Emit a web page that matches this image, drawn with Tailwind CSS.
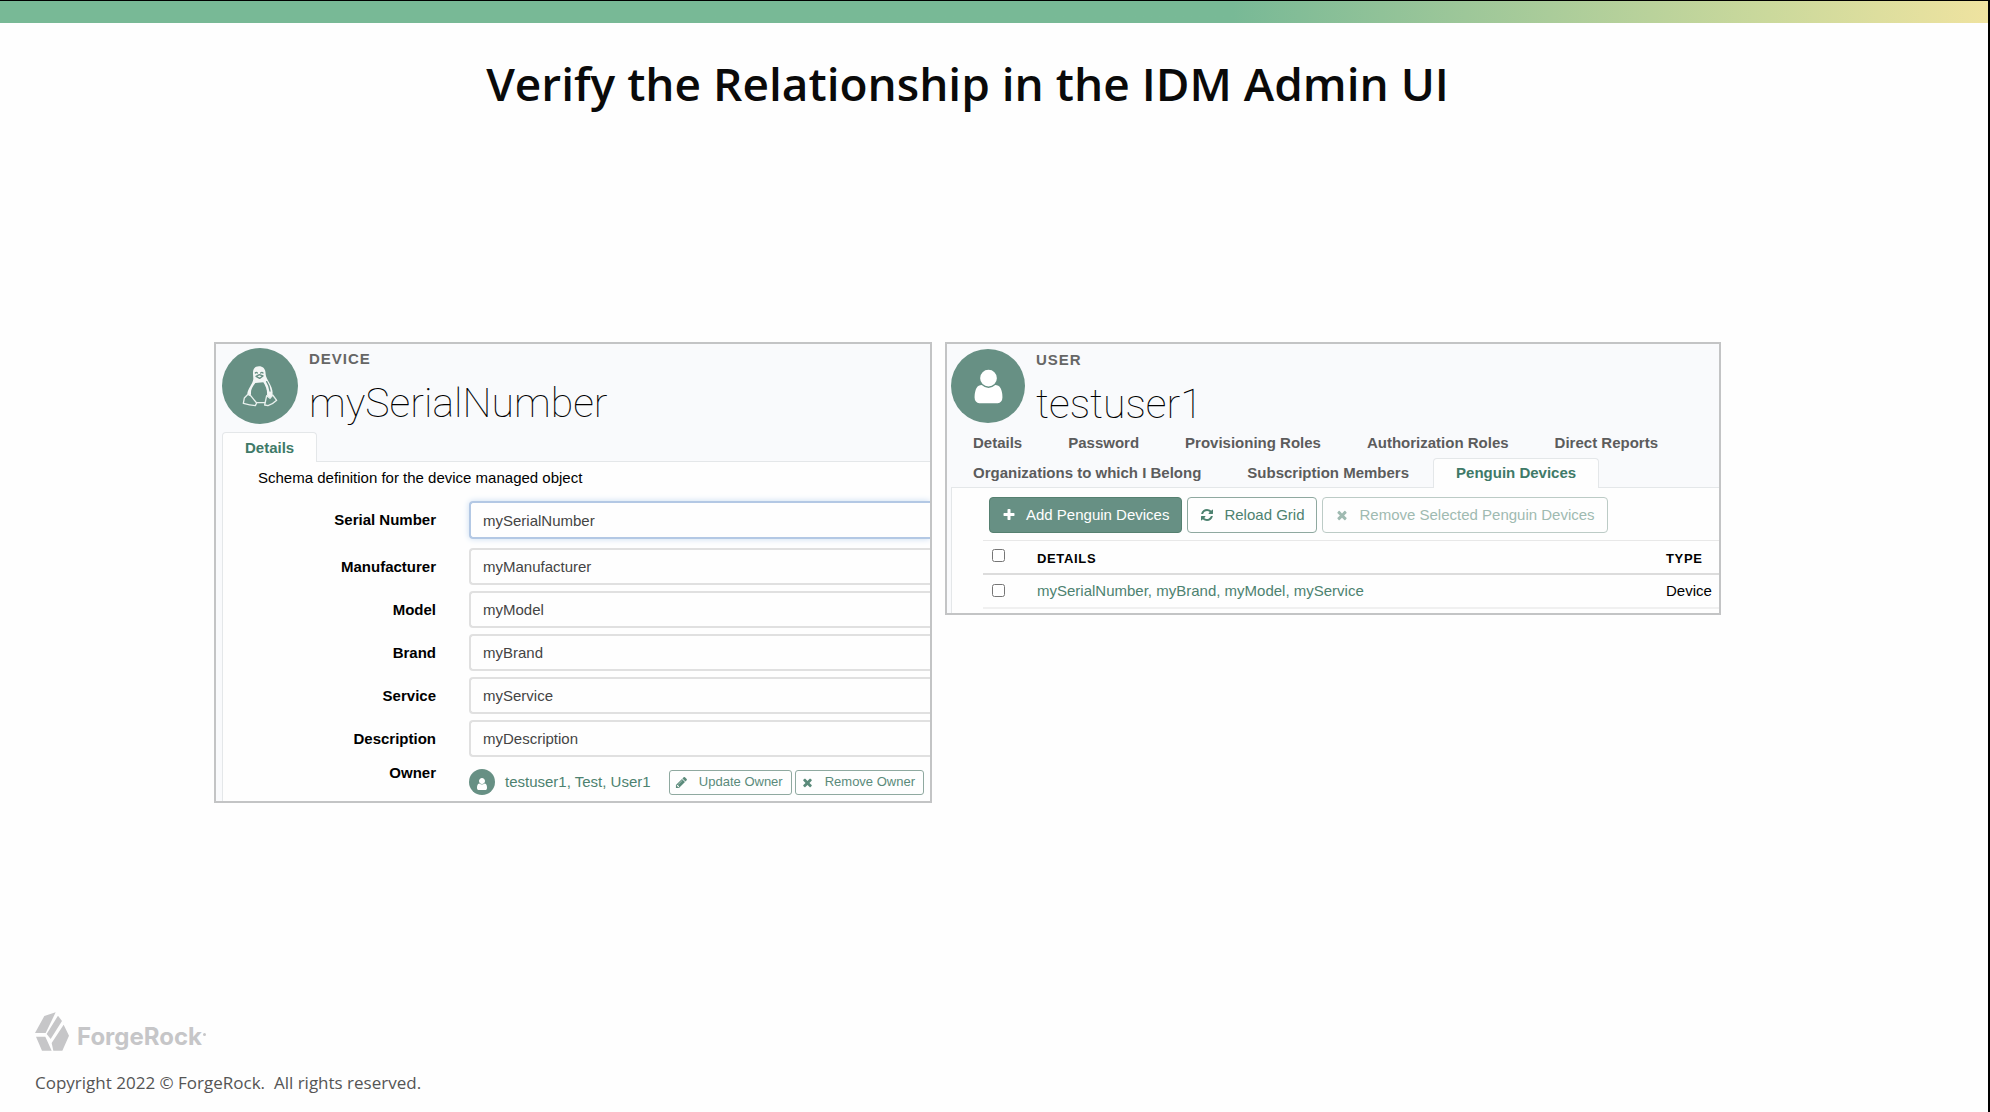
<!DOCTYPE html>
<html lang="en">
<head>
<meta charset="utf-8">
<title>Verify the Relationship in the IDM Admin UI</title>
<script src="https://cdn.jsdelivr.net/npm/@tailwindcss/browser@4"></script>
</head>
<body class="flex min-h-screen flex-col border-t border-r-2 border-black border-t-black bg-[#fefefe] font-['Liberation_Sans',Arial,sans-serif] text-[15px] leading-5 text-black">
<svg class="hidden" aria-hidden="true">
  <symbol id="i-plus" viewBox="0 0 1792 1792"><path d="M1600 736v192q0 40-28 68t-68 28h-416v416q0 40-28 68t-68 28h-192q-40 0-68-28t-28-68v-416h-416q-40 0-68-28t-28-68v-192q0-40 28-68t68-28h416v-416q0-40 28-68t68-28h192q40 0 68 28t28 68v416h416q40 0 68 28t28 68z"/></symbol>
  <symbol id="i-times" viewBox="0 0 1792 1792"><path d="M1490 1322q0 40-28 68l-136 136q-28 28-68 28t-68-28l-294-294-294 294q-28 28-68 28t-68-28l-136-136q-28-28-28-68t28-68l294-294-294-294q-28-28-28-68t28-68l136-136q28-28 68-28t68 28l294 294 294-294q28-28 68-28t68 28l136 136q28 28 28 68t-28 68l-294 294 294 294q28 28 28 68z"/></symbol>
  <symbol id="i-refresh" viewBox="0 0 1792 1792"><path d="M1639 1056q0 5-1 7-64 268-268 434.5t-478 166.5q-146 0-282.5-55t-243.5-157l-129 129q-19 19-45 19t-45-19-19-45v-448q0-26 19-45t45-19h448q26 0 45 19t19 45-19 45l-137 137q71 66 161 102t187 36q134 0 250-65t186-179q11-17 53-117 8-23 30-23h192q13 0 22.5 9.5t9.5 22.5zm25-800v448q0 26-19 45t-45 19h-448q-26 0-45-19t-19-45 19-45l138-138q-148-137-349-137-134 0-250 65t-186 179q-11 17-53 117-8 23-30 23h-199q-13 0-22.5-9.5t-9.5-22.5v-7q65-268 270-434.5t480-166.5q146 0 284 55.5t245 156.5l130-129q19-19 45-19t45 19 19 45z"/></symbol>
  <symbol id="i-pencil" viewBox="0 0 1792 1792"><path d="M491 1536l91-91-235-235-91 91v107h128v128h107zm523-928q0-22-22-22-10 0-17 7l-542 542q-7 7-7 17 0 22 22 22 10 0 17-7l542-542q7-7 7-17zm-54-192l416 416-832 832h-416v-416zm683 96q0 53-37 90l-166 166-416-416 166-165q36-38 90-38 53 0 91 38l235 234q37 39 37 91z"/></symbol>
  <symbol id="i-user" viewBox="0 0 1792 1792"><path d="M1536 1399q0 109-62.5 187t-150.5 78h-854q-88 0-150.5-78t-62.5-187q0-85 8.5-160.5t31.5-152 58.5-131 94-89 134.5-34.5q131 128 313 128t313-128q76 0 134.5 34.5t94 89 58.5 131 31.5 152 8.5 160.5zm-256-887q0 159-112.5 271.5t-271.5 112.5-271.5-112.5-112.5-271.5 112.5-271.5 271.5-112.5 271.5 112.5 112.5 271.5z"/></symbol>
</svg>

<div class="h-[22px] bg-linear-to-r from-[#78b996] from-62% via-[#cbd99c] via-89% to-[#efe3a0]"></div>

<main class="mr-[53px]">
  <h1 class="mt-[26px] text-center font-['Open_Sans',sans-serif] text-[46px] leading-[68px] font-semibold text-[#0a0a0a]">Verify the Relationship in the IDM Admin UI</h1>

  <div class="mx-[214px] mt-[225px] grid grid-cols-[718fr_776fr] items-start gap-[13px]">

    <section class="h-[461px] overflow-hidden border-2 border-[#c3c4c5] bg-[#f9fafc] pl-1.5">
      <header class="flex h-[88px] gap-[11px] pt-1">
        <div class="flex size-[76px] shrink-0 items-center justify-center rounded-full bg-[#679084]">
          <svg class="h-[42px] w-[36px]" viewBox="20 10 108 126" stroke-linejoin="round" stroke-linecap="round">
            <path d="M53 36C52 20 60 14 71 14S91 21 91 38C91 52 112 72 112 94Q112 104 106 108L96 104 92 84 84 66H60L48 88 46 104 36 98C36 82 52 68 54 52Z" fill="#fff" fill-opacity=".92"/>
            <path d="M60 64C48 78 44 92 50 102L66 122H88L94 106C98 90 92 74 84 62Z" fill="#679084"/>
            <path d="M60 34q3-4 6 0M76 34q4-4 7 0M62 44l10-5 11 4-10 7zM94 60q8 12 10 28" fill="none" stroke="#679084" stroke-width="4"/>
            <path d="M38 98L46 102 64 124 60 132Q44 130 24 125L27 109ZM94 102L104 110 112 100 124 116Q112 128 98 132L88 130ZM64 123H90" fill="none" stroke="#e8f0ed" stroke-width="4"/>
          </svg>
        </div>
        <div>
          <p class="pt-px text-[15px] leading-5 font-bold tracking-[1px] text-[#666]">DEVICE</p>
          <h2 class="mt-3 font-['Roboto',sans-serif] text-[41px] leading-[44px] font-thin">mySerialNumber</h2>
        </div>
      </header>
      <nav class="flex"><a href="#" class="relative z-10 -mb-px h-[30px] rounded-t border border-b-0 border-[#e4e7e9] bg-[#fefefe] px-[22px] pt-[5px] font-bold text-[#3f7a68]">Details</a></nav>
      <div class="border-t border-l border-[#e4e7e9] bg-[#fefefe] pb-[30px]">
        <p class="pt-[6px] pl-[35px]">Schema definition for the device managed object</p>
        <form class="grid grid-cols-[213px_1fr] items-center gap-x-[33px] gap-y-1.5 pt-[13px]">
          <label for="serial" class="mb-[3px] text-right font-bold">Serial Number</label>
          <input id="serial" value="mySerialNumber" class="mb-[3px] h-[38px] rounded-l border-2 border-r-0 border-[#b3c8e4] px-3 text-[#444] shadow-[0_0_6px_#c9dcf2]">
          <label for="manufacturer" class="text-right font-bold">Manufacturer</label>
          <input id="manufacturer" value="myManufacturer" class="h-[37px] rounded-l border-2 border-r-0 border-[#e0e0e0] px-3 text-[#444]">
          <label for="model" class="text-right font-bold">Model</label>
          <input id="model" value="myModel" class="h-[37px] rounded-l border-2 border-r-0 border-[#e0e0e0] px-3 text-[#444]">
          <label for="brand" class="text-right font-bold">Brand</label>
          <input id="brand" value="myBrand" class="h-[37px] rounded-l border-2 border-r-0 border-[#e0e0e0] px-3 text-[#444]">
          <label for="service" class="text-right font-bold">Service</label>
          <input id="service" value="myService" class="h-[37px] rounded-l border-2 border-r-0 border-[#e0e0e0] px-3 text-[#444]">
          <label for="description" class="text-right font-bold">Description</label>
          <input id="description" value="myDescription" class="h-[37px] rounded-l border-2 border-r-0 border-[#e0e0e0] px-3 text-[#444]">
          <span class="self-start text-right font-bold">Owner</span>
          <div class="flex items-center pt-1.5">
            <span class="flex size-[26px] shrink-0 items-center justify-center rounded-full bg-[#679084] text-white"><svg class="mt-1 size-[14px] fill-current"><use href="#i-user"/></svg></span>
            <a href="#" class="ml-[10px] whitespace-nowrap text-[#4d8270]">testuser1, Test, User1</a>
            <button type="button" class="ml-auto flex h-[25px] items-center gap-[11px] rounded-[3px] border border-[#8fa9a0] pr-2 pl-[5px] text-[13px] whitespace-nowrap text-[#5a8a7a]"><svg class="size-[13px] fill-current"><use href="#i-pencil"/></svg>Update Owner</button>
            <button type="button" class="mr-[6px] ml-[3px] flex h-[25px] items-center gap-[11px] rounded-[3px] border border-[#8fa9a0] pr-2 pl-[5px] text-[13px] whitespace-nowrap text-[#5a8a7a]"><svg class="size-[13px] fill-current"><use href="#i-times"/></svg>Remove Owner</button>
          </div>
        </form>
      </div>
    </section>

    <section class="h-[273px] overflow-hidden border-2 border-[#c3c4c5] bg-[#f9fafc] pl-1">
      <header class="flex h-[87px] gap-[11px] pt-[5px]">
        <div class="flex size-[74px] shrink-0 items-center justify-center rounded-full bg-[#679084] text-white"><svg class="size-[39px] fill-current"><use href="#i-user"/></svg></div>
        <div>
          <p class="pt-px text-[15px] leading-5 font-bold tracking-[1px] text-[#666]">USER</p>
          <h2 class="mt-3 font-['Roboto',sans-serif] text-[41px] leading-[44px] font-thin">testuser1</h2>
        </div>
      </header>
      <nav class="relative z-10 -mb-px font-bold text-[#5c5c5c]">
        <div class="flex h-[27px] gap-[46px] px-[22px] pt-0.5">
          <a href="#">Details</a><a href="#">Password</a><a href="#">Provisioning Roles</a><a href="#">Authorization Roles</a><a href="#">Direct Reports</a>
        </div>
        <div class="flex h-[30px] pl-[22px]">
          <a href="#" class="mr-[46px] pt-[5px]">Organizations to which I Belong</a><a href="#" class="mr-6 pt-[5px]">Subscription Members</a>
          <a href="#" class="rounded-t border border-b-0 border-[#e4e7e9] bg-[#fefefe] px-[22px] pt-1 text-[#3f7a68]">Penguin Devices</a>
        </div>
      </nav>
      <div class="border-t border-l border-[#e4e7e9] bg-[#fefefe] pt-[9px] pb-6 pl-[31px]">
        <div class="flex gap-[5px] pl-[6px]">
          <button type="button" class="flex h-[36px] items-center gap-[10px] rounded border border-[#558070] bg-[#679084] px-3 whitespace-nowrap text-white"><svg class="size-[14px] fill-current"><use href="#i-plus"/></svg>Add Penguin Devices</button>
          <button type="button" class="flex h-[36px] items-center gap-[10px] rounded border border-[#8fa9a0] px-3 whitespace-nowrap text-[#4d8270]"><svg class="size-[14px] fill-current"><use href="#i-refresh"/></svg>Reload Grid</button>
          <button type="button" disabled class="flex h-[36px] items-center gap-[10px] rounded border border-[#bccbc6] px-3 whitespace-nowrap text-[#9fbab1]"><svg class="size-[14px] fill-current"><use href="#i-times"/></svg>Remove Selected Penguin Devices</button>
        </div>
        <table class="mt-[7px] w-full table-fixed border-collapse text-left">
          <thead>
            <tr class="h-[33px] border-t border-b-2 border-t-[#e8e8e8] border-b-[#dcdcdc] text-[13px]">
              <th class="w-[54px] pb-0.5 pl-[9px]"><input type="checkbox" aria-label="Select all" class="block size-[13px]"></th>
              <th class="pt-1 tracking-wider">DETAILS</th>
              <th class="w-[53px] pt-1 tracking-wider">TYPE</th>
            </tr>
          </thead>
          <tbody>
            <tr class="h-[34px] border-b-2 border-[#f0f0f0]">
              <td class="pl-[9px]"><input type="checkbox" aria-label="Select row" class="block size-[13px]"></td>
              <td><a href="#" class="text-[#4d8270]">mySerialNumber, myBrand, myModel, myService</a></td>
              <td>Device</td>
            </tr>
          </tbody>
        </table>
      </div>
    </section>
  </div>
</main>

<footer class="mt-auto pb-[17px] pl-[35px]">
  <div class="flex items-center gap-2 text-[#c6c6c8]">
    <svg class="h-[39px] w-[34px] fill-current" viewBox="0 0 102 117"><path d="M0 63L28 12 62 1 32 63ZM69 11L81 27 47 81 35 66ZM86 38L102 71 82 116H55L50 93ZM3 74H31L50 116H21Z"/></svg>
    <span class="flex items-center gap-px pt-[10px] font-['Inter',sans-serif] text-[24px] leading-6 font-bold">ForgeRock<i class="mb-1 size-[3px] rounded-full bg-current"></i></span>
  </div>
  <p class="mt-5 font-['Open_Sans',sans-serif] text-[17px] leading-6 whitespace-pre text-[#555]">Copyright 2022 © ForgeRock.  All rights reserved.</p>
</footer>
</body>
</html>
